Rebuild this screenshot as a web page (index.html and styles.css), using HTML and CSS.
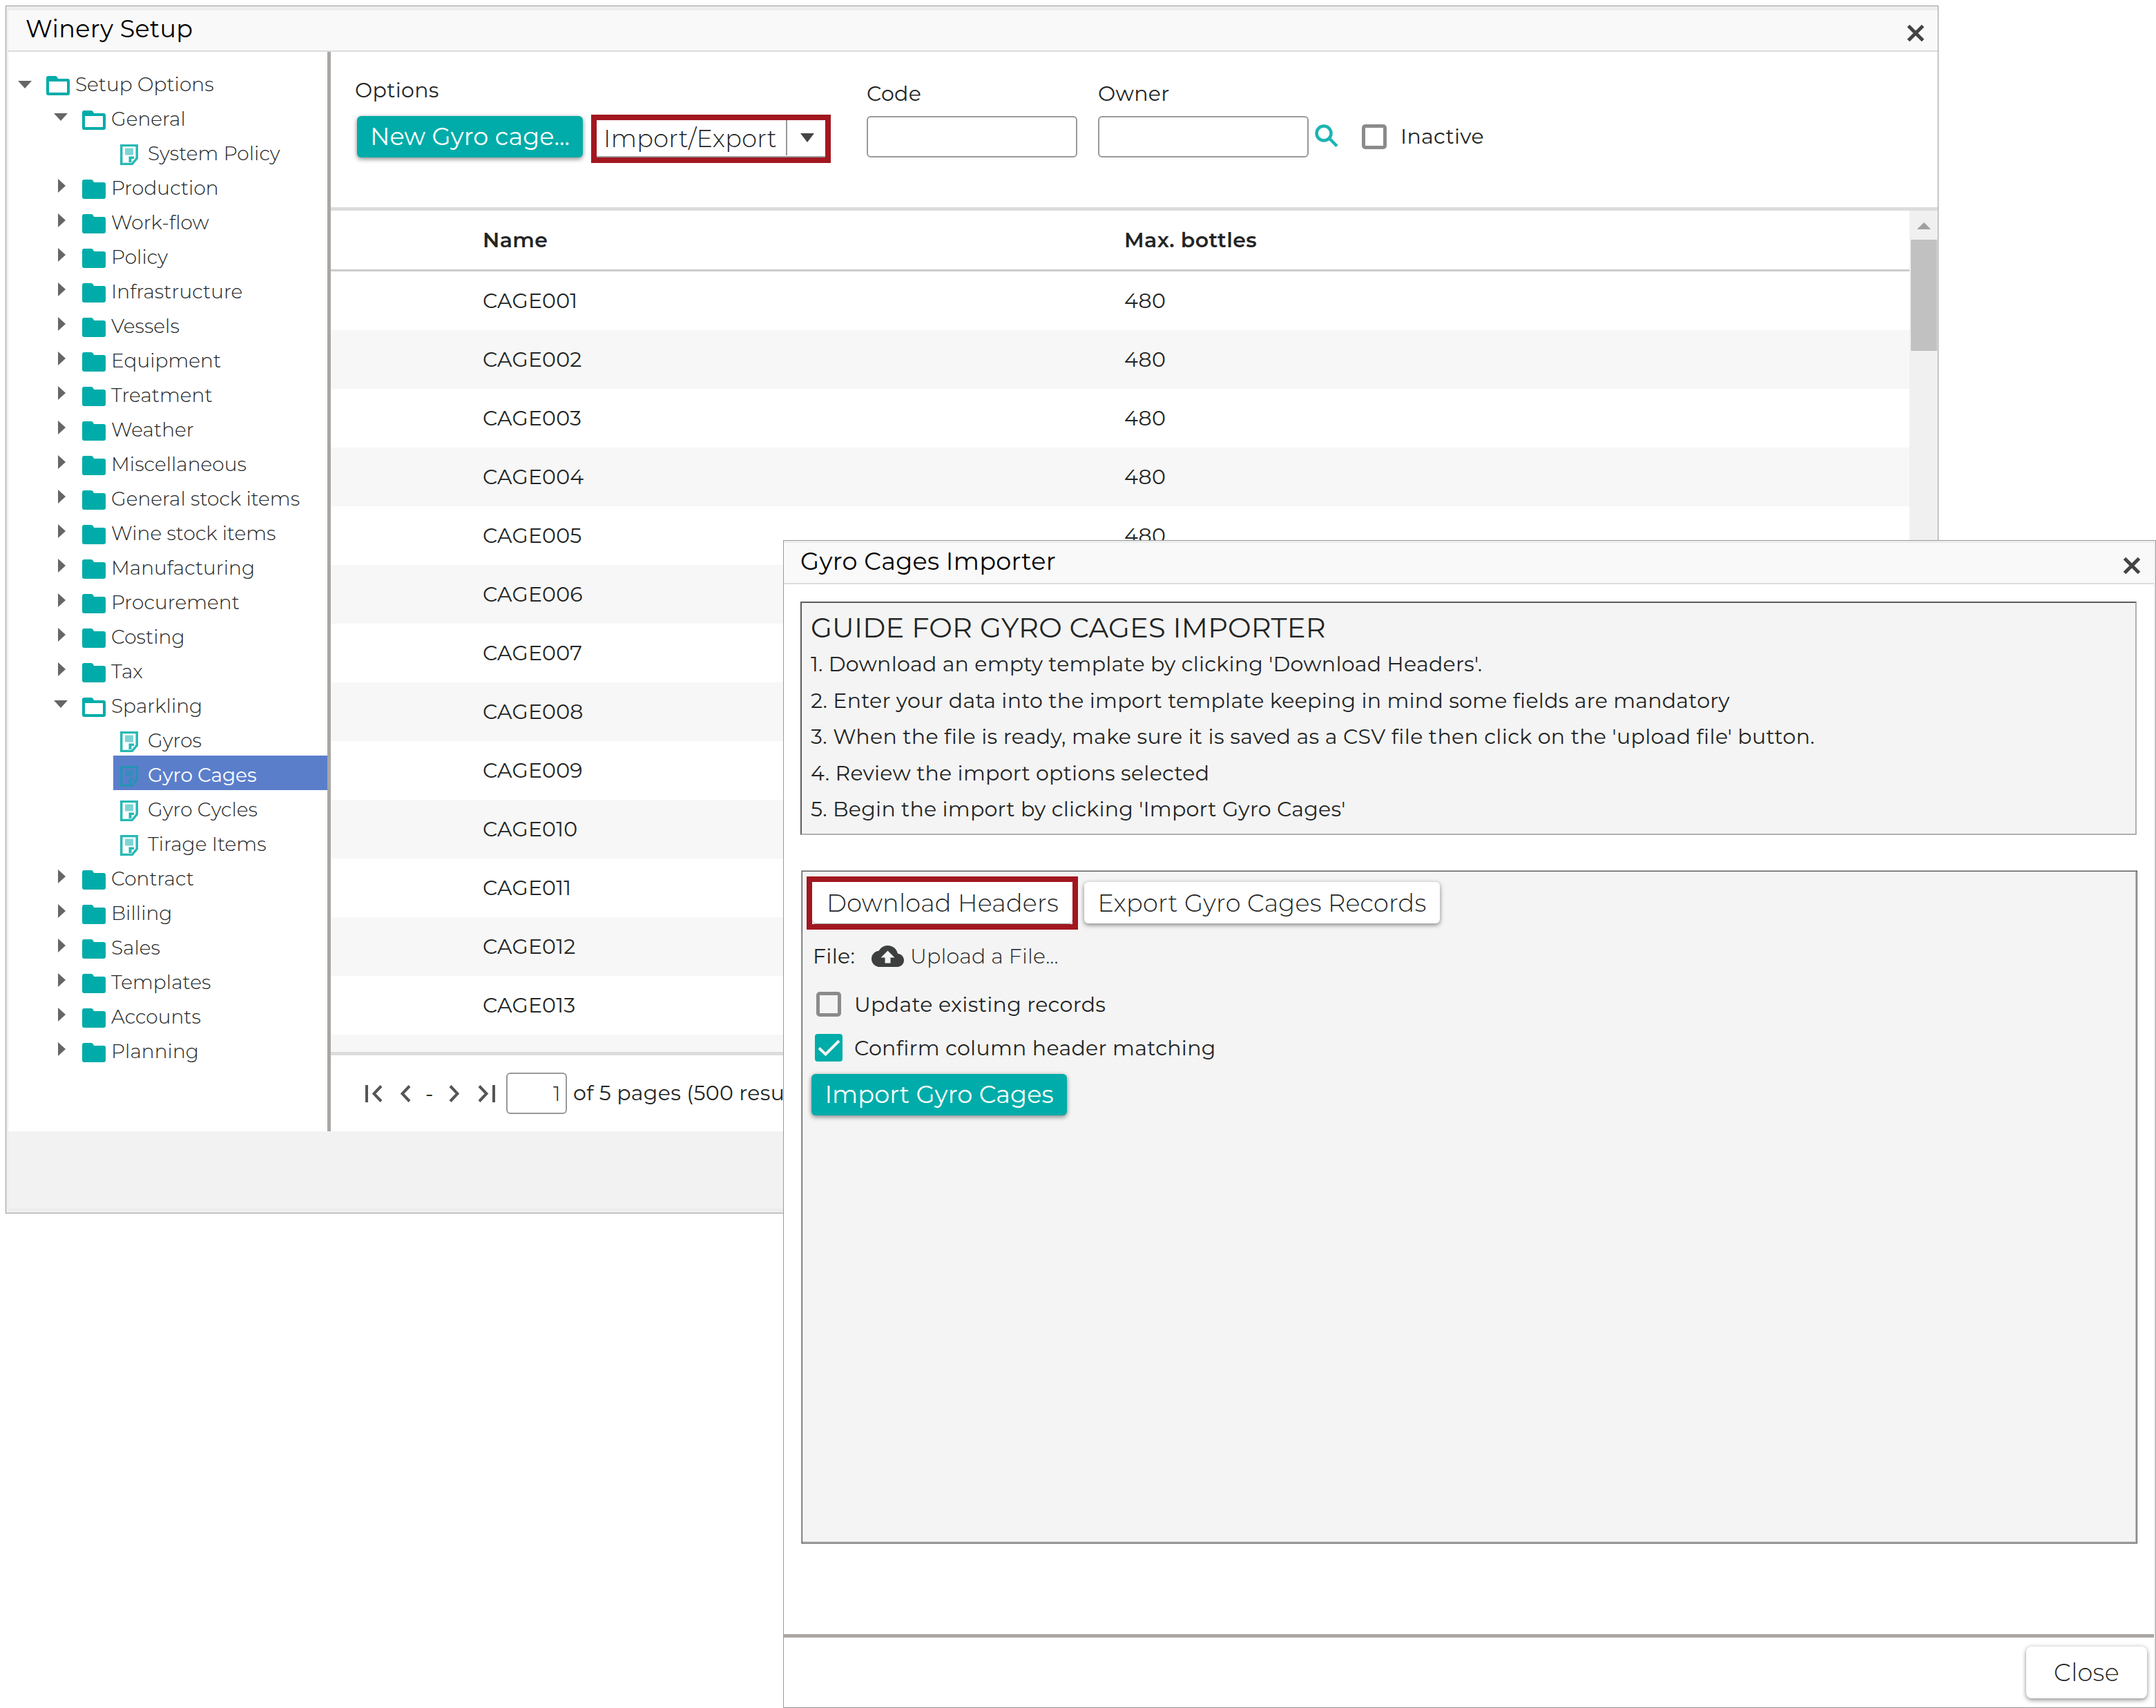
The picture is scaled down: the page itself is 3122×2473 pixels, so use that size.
FILE: index.html
```html
<!DOCTYPE html>
<html lang="en">
<head>
<meta charset="utf-8">
<title>Winery Setup</title>
<link rel="stylesheet" href="styles.css">
</head>
<body>
<svg class="sprite" aria-hidden="true">
  <symbol id="folder" viewBox="0 0 34 28"><path d="M3 0h10q2 0 3 2l1 2h14q3 0 3 3v18q0 3-3 3H3q-3 0-3-3V3q0-3 3-3z"/></symbol>
  <symbol id="folder-open" viewBox="0 0 34 28"><path fill-rule="evenodd" d="M3 0h10q2 0 3 2l1 2h14q3 0 3 3v18q0 3-3 3H3q-3 0-3-3V3q0-3 3-3zM4 8v16h26V8z"/></symbol>
  <symbol id="doc" viewBox="0 0 26 30"><path d="M1.750 1.500h22.500V20l-7 8.500H1.750z" fill="none" stroke="currentColor" stroke-width="3.500"/><path d="M7 5.500h12v10H7z" opacity=".6"/><path d="M12.500 26v-8.500H20V21h-3.500v5z"/></symbol>
  <symbol id="down" viewBox="0 0 20 11"><path d="M0 0h20L10 11z"/></symbol>
  <symbol id="right" viewBox="0 0 11 20"><path d="M0 0v20l11-10z"/></symbol>
  <symbol id="close" viewBox="0 0 26 26"><path d="M2.500 2.500l21 21M23.500 2.500l-21 21" fill="none" stroke="currentColor" stroke-width="5"/></symbol>
</svg>

<section class="window main-window">
  <header class="titlebar"><h1 class="title">Winery Setup</h1><svg class="close-x"><use href="#close"/></svg></header>
  <div class="workspace">
    <nav class="tree">
      <div class="node root"><svg class="arrow down"><use href="#down"/></svg><svg class="folder"><use href="#folder-open"/></svg><span class="label">Setup Options</span></div>
      <div class="node"><svg class="arrow down"><use href="#down"/></svg><svg class="folder"><use href="#folder-open"/></svg><span class="label">General</span></div>
      <div class="node leaf"><svg class="doc"><use href="#doc"/></svg><span class="label">System Policy</span></div>
      <div class="node"><svg class="arrow"><use href="#right"/></svg><svg class="folder"><use href="#folder"/></svg><span class="label">Production</span></div>
      <div class="node"><svg class="arrow"><use href="#right"/></svg><svg class="folder"><use href="#folder"/></svg><span class="label">Work-flow</span></div>
      <div class="node"><svg class="arrow"><use href="#right"/></svg><svg class="folder"><use href="#folder"/></svg><span class="label">Policy</span></div>
      <div class="node"><svg class="arrow"><use href="#right"/></svg><svg class="folder"><use href="#folder"/></svg><span class="label">Infrastructure</span></div>
      <div class="node"><svg class="arrow"><use href="#right"/></svg><svg class="folder"><use href="#folder"/></svg><span class="label">Vessels</span></div>
      <div class="node"><svg class="arrow"><use href="#right"/></svg><svg class="folder"><use href="#folder"/></svg><span class="label">Equipment</span></div>
      <div class="node"><svg class="arrow"><use href="#right"/></svg><svg class="folder"><use href="#folder"/></svg><span class="label">Treatment</span></div>
      <div class="node"><svg class="arrow"><use href="#right"/></svg><svg class="folder"><use href="#folder"/></svg><span class="label">Weather</span></div>
      <div class="node"><svg class="arrow"><use href="#right"/></svg><svg class="folder"><use href="#folder"/></svg><span class="label">Miscellaneous</span></div>
      <div class="node"><svg class="arrow"><use href="#right"/></svg><svg class="folder"><use href="#folder"/></svg><span class="label">General stock items</span></div>
      <div class="node"><svg class="arrow"><use href="#right"/></svg><svg class="folder"><use href="#folder"/></svg><span class="label">Wine stock items</span></div>
      <div class="node"><svg class="arrow"><use href="#right"/></svg><svg class="folder"><use href="#folder"/></svg><span class="label">Manufacturing</span></div>
      <div class="node"><svg class="arrow"><use href="#right"/></svg><svg class="folder"><use href="#folder"/></svg><span class="label">Procurement</span></div>
      <div class="node"><svg class="arrow"><use href="#right"/></svg><svg class="folder"><use href="#folder"/></svg><span class="label">Costing</span></div>
      <div class="node"><svg class="arrow"><use href="#right"/></svg><svg class="folder"><use href="#folder"/></svg><span class="label">Tax</span></div>
      <div class="node"><svg class="arrow down"><use href="#down"/></svg><svg class="folder"><use href="#folder-open"/></svg><span class="label">Sparkling</span></div>
      <div class="node leaf"><svg class="doc"><use href="#doc"/></svg><span class="label">Gyros</span></div>
      <div class="node leaf selected"><svg class="doc"><use href="#doc"/></svg><span class="label">Gyro Cages</span></div>
      <div class="node leaf"><svg class="doc"><use href="#doc"/></svg><span class="label">Gyro Cycles</span></div>
      <div class="node leaf"><svg class="doc"><use href="#doc"/></svg><span class="label">Tirage Items</span></div>
      <div class="node"><svg class="arrow"><use href="#right"/></svg><svg class="folder"><use href="#folder"/></svg><span class="label">Contract</span></div>
      <div class="node"><svg class="arrow"><use href="#right"/></svg><svg class="folder"><use href="#folder"/></svg><span class="label">Billing</span></div>
      <div class="node"><svg class="arrow"><use href="#right"/></svg><svg class="folder"><use href="#folder"/></svg><span class="label">Sales</span></div>
      <div class="node"><svg class="arrow"><use href="#right"/></svg><svg class="folder"><use href="#folder"/></svg><span class="label">Templates</span></div>
      <div class="node"><svg class="arrow"><use href="#right"/></svg><svg class="folder"><use href="#folder"/></svg><span class="label">Accounts</span></div>
      <div class="node"><svg class="arrow"><use href="#right"/></svg><svg class="folder"><use href="#folder"/></svg><span class="label">Planning</span></div>
    </nav>
    <main class="content">
      <div class="toolbar">
        <div class="options">
          <div class="caption">Options</div>
          <div class="buttons">
            <button class="btn primary new-cage">New Gyro cage...</button>
            <div class="split highlight"><span class="split-label">Import/Export</span><span class="split-arrow"><svg viewBox="0 0 20 13"><path d="M0 0h20L10 13z"/></svg></span></div>
          </div>
        </div>
        <label class="field"><span class="caption">Code</span><input type="text"></label>
        <label class="field"><span class="caption">Owner</span><input type="text"></label>
        <svg class="search" viewBox="0 0 34 33"><circle cx="13" cy="13" r="10.500"/><path d="M20.500 20L32 31.500"/></svg>
        <span class="check toolbar-check"></span>
        <span class="inactive">Inactive</span>
      </div>
      <div class="list">
        <div class="grid">
          <div class="row head"><span class="name">Name</span><span>Max. bottles</span></div>
          <div class="row"><span class="name">CAGE001</span><span>480</span></div>
          <div class="row"><span class="name">CAGE002</span><span>480</span></div>
          <div class="row"><span class="name">CAGE003</span><span>480</span></div>
          <div class="row"><span class="name">CAGE004</span><span>480</span></div>
          <div class="row"><span class="name">CAGE005</span><span>480</span></div>
          <div class="row"><span class="name">CAGE006</span></div>
          <div class="row"><span class="name">CAGE007</span></div>
          <div class="row"><span class="name">CAGE008</span></div>
          <div class="row"><span class="name">CAGE009</span></div>
          <div class="row"><span class="name">CAGE010</span></div>
          <div class="row"><span class="name">CAGE011</span></div>
          <div class="row"><span class="name">CAGE012</span></div>
          <div class="row"><span class="name">CAGE013</span></div>
          <div class="row"></div>
        </div>
        <div class="scrollbar"><svg class="scroll-up" viewBox="0 0 20 10"><path d="M0 10h20L10 0z"/></svg><div class="thumb"></div></div>
      </div>
      <div class="pager">
        <svg class="first" viewBox="0 0 25 25"><path d="M2 0v25M23 1.500L12.500 12.500 23 23.500"/></svg>
        <svg class="prev" viewBox="0 0 15 25"><path d="M13 1.500L2.500 12.500 13 23.500"/></svg>
        <span class="dash">-</span>
        <svg class="next" viewBox="0 0 15 25"><path d="M2 1.500L12.500 12.500 2 23.500"/></svg>
        <svg class="last" viewBox="0 0 25 25"><path d="M23 0v25M2 1.500L12.500 12.500 2 23.500"/></svg>
        <input class="page" type="text" value="1">
        <span class="total">of 5 pages (500 resu</span>
      </div>
    </main>
  </div>
  <footer class="main-footer"></footer>
</section>

<section class="window importer">
  <header class="titlebar"><h2 class="title">Gyro Cages Importer</h2><svg class="close-x"><use href="#close"/></svg></header>
  <div class="importer-body">
    <div class="guide">
      <h3>GUIDE FOR GYRO CAGES IMPORTER</h3>
      <p>1. Download an empty template by clicking 'Download Headers'.</p>
      <p>2. Enter your data into the import template keeping in mind some fields are mandatory</p>
      <p class="wide">3. When the file is ready, make sure it is saved as a CSV file then click on the 'upload file' button.</p>
      <p>4. Review the import options selected</p>
      <p>5. Begin the import by clicking 'Import Gyro Cages'</p>
    </div>
    <div class="actions">
      <div class="action-row">
        <div class="highlight download"><button class="btn plain">Download Headers</button></div>
        <button class="btn export">Export Gyro Cages Records</button>
      </div>
      <div class="file-row"><span class="file-label">File:</span>
        <svg class="cloud" viewBox="0 0 47 31"><path fill-rule="evenodd" d="M37.900 11.700C36.600 5 30.700 0 23.500 0 17.900 0 13 3.200 10.500 7.800 4.600 8.400 0 13.400 0 19.300 0 25.800 5.300 31 11.800 31h25.400C42.600 31 47 26.700 47 21.300c0-5.100-4-9.300-9.100-9.600zM27.500 17.500v8h-8v-8h-6l10-10 10 10z"/></svg>
        <span class="upload">Upload a File...</span></div>
      <div class="check-row update"><span class="check"></span><span>Update existing records</span></div>
      <div class="check-row confirm"><svg class="checked" viewBox="0 0 40 40"><rect width="40" height="40" rx="4"/><path d="M6 20.500l9.500 9L35 10"/></svg><span>Confirm column header matching</span></div>
      <button class="btn primary import">Import Gyro Cages</button>
    </div>
  </div>
  <footer class="importer-footer"><button class="btn close-btn">Close</button></footer>
</section>
</body>
</html>
```
FILE: styles.css
```css
* { box-sizing: border-box; }

body {
  position: relative;
  width: 3122px;
  height: 2473px;
  margin: 0;
  overflow: hidden;
  background: #fff;
  color: #232525;
  font-family: Montserrat, Inter, "Open Sans", sans-serif;
  font-size: 30px;
  font-weight: 400;
  letter-spacing: .32px;
}

h1, h2, h3, p { margin: 0; font-weight: 400; }
svg { display: block; flex: none; fill: currentColor; }
button, input { font: inherit; color: inherit; letter-spacing: inherit; }
.sprite { position: absolute; width: 0; height: 0; }

/* Windows */
.window {
  position: absolute;
  display: flex;
  flex-direction: column;
  border: 1px solid #9b9b9b;
  background: #ededed;
}
.main-window {
  left: 8px;
  top: 8px;
  width: 2799px;
  height: 1749px;
  padding: 6px 0 6px 3px;
}
.importer {
  left: 1134px;
  top: 782px;
  width: 1988px;
  height: 1691px;
  padding: 3px 2px 1px 0;
}
.titlebar {
  display: flex;
  flex: none;
  justify-content: space-between;
  height: 60px;
  background: #f9f9f9;
  border-bottom: 2px solid #dcdcdc;
  color: #000;
}
.title { font-size: 35px; line-height: 54px; white-space: nowrap; }
.main-window .title { padding-left: 25px; }
.importer .title { padding-left: 24px; }
.close-x { width: 26px; height: 26px; margin: 20px 19px 0 0; color: #444; }

/* Tree */
.workspace { display: flex; height: 1563px; background: #fff; }
.tree {
  flex: none;
  width: 467px;
  padding-top: 19px;
  border-right: 5px solid #aaa6a3;
  font-size: 28px;
  font-weight: 300;
  letter-spacing: .04px;
}
.node {
  display: flex;
  height: 50px;
  padding-left: 72px;
  white-space: nowrap;
}
.arrow { width: 11px; height: 20px; margin: 15px 24px 0 0; color: #666; }
.arrow.down { width: 20px; height: 11px; margin: 20px 21px 0 -6px; }
.folder { width: 34px; height: 28px; margin: 16px 8px 0 0; color: #00aca9; }
.label { margin-top: 3px; line-height: 50px; }
.root { padding-left: 20px; }
.root .arrow.down { margin-top: 23px; }
.leaf { margin-left: 152px; padding-left: 10px; }
.doc { width: 26px; height: 30px; margin: 15px 14px 0 0; color: #28b9b5; }
.selected { background: #5b7ecb; color: #fff; font-weight: 400; letter-spacing: -.1px; }
.selected .doc { color: #2593b5; }

/* Toolbar */
.content { display: flex; flex-direction: column; flex: 1; min-width: 0; }
.toolbar {
  display: flex;
  align-items: flex-start;
  flex: none;
  height: 230px;
  padding: 35px 0 0 34px;
  border-bottom: 5px solid #dcdcdc;
  white-space: nowrap;
}
.caption { display: block; line-height: 42px; }
.options .caption { margin-bottom: 16px; padding-left: 1px; }
.buttons { display: flex; align-items: flex-start; }
.btn {
  height: 60px;
  padding: 0;
  border: 0;
  border-radius: 6px;
  background: #fff;
  box-shadow: 0 3px 6px rgba(0, 0, 0, .35), 0 0 6px rgba(0, 0, 0, .15);
  font-size: 35px;
  font-weight: 300;
  line-height: 60px;
  text-align: center;
  white-space: nowrap;
}
.primary { background: #00aca9; color: #fff; font-weight: 400; letter-spacing: .1px; }
.new-cage { width: 327px; margin: 0 12px 0 4px; line-height: 58px; }
.highlight { border: 8px solid #a2171f; background: #fff; }
.split {
  display: flex;
  width: 347px;
  height: 70px;
  margin: -2px 52px 0 0;
  font-size: 35px;
  font-weight: 300;
  box-shadow: inset 0 -2px #999;
}
.split-label { width: 276px; height: 51px; padding-left: 10px; border-right: 2px solid #999; line-height: 53px; }
.split-arrow { padding: 19px 0 0 19px; color: #444; }
.split-arrow svg { width: 20px; height: 13px; }
.field { display: flex; flex-direction: column; gap: 11px; margin: 5px 30px 0 0; }
.field + .field { margin-right: 9px; }
input { padding: 0; border: 2px solid #999; border-radius: 6px; background: #fff; outline: 0; }
.field input { width: 305px; height: 60px; }
.search { width: 34px; height: 33px; margin: 70px 34px 0 0; fill: none; stroke: #1cb5b2; stroke-width: 4.500; }
.check { flex: none; width: 36px; height: 36px; border: 5px solid #8b8b8b; border-radius: 5px; }
.toolbar-check { margin: 70px 20px 0 0; }
.inactive { margin-top: 58px; line-height: 60px; }

/* Cage list */
.list { display: flex; height: 1218px; overflow: hidden; }
.grid { flex: 1; }
.row { display: flex; height: 85px; padding-left: 220px; line-height: 85px; }
.row:nth-child(odd) { background: #f7f7f7; }
.row.head { height: 88px; border-bottom: 3px solid #ccc; background: #fff; font-weight: 600; letter-spacing: .4px; }
.name { width: 929px; }
.scrollbar { width: 41px; background: #f0f0f0; padding: 17px 1px 0 2px; }
.scroll-up { width: 20px; height: 10px; margin: 0 0 15px 9px; color: #a0a0a0; }
.thumb { height: 161px; background: #c1c1c1; }

/* Pager */
.pager {
  display: flex;
  align-items: center;
  height: 115px;
  padding-left: 50px;
  border-top: 5px solid #dcdcdc;
  white-space: nowrap;
}
.pager svg { height: 25px; fill: none; stroke: #555; stroke-width: 4; }
.first, .last { width: 25px; }
.prev, .next { width: 15px; }
.prev { margin-left: 26px; }
.dash { width: 14px; margin: 0 20px 0 21px; }
.last { margin: 0 16px 0 27px; }
.page { width: 88px; height: 60px; padding-right: 7px; text-align: right; font-weight: 300; }
.total { margin-left: 9px; padding-bottom: 2px; }
.main-footer { flex: 1; background: #f2f2f2; }

/* Importer */
.importer-body { flex: 1; padding: 25px 0 0 24px; background: #fff; }
.guide {
  width: 1935px;
  height: 338px;
  margin-bottom: 51px;
  padding: 10px 13px;
  border: 2px solid;
  border-color: #5c5c5c #b0b0b0 #b0b0b0 #5c5c5c;
  background: #f4f4f4;
  letter-spacing: .26px;
  white-space: nowrap;
}
.guide h3 { margin-bottom: 2px; font-size: 40px; line-height: 51px; letter-spacing: .2px; }
.guide p { line-height: 52.500px; }
.guide .wide { letter-spacing: .35px; }
.actions {
  width: 1935px;
  height: 975px;
  margin-left: 1px;
  padding: 8px 7px;
  border: 1px solid;
  border-color: #b0b0b0 #5c5c5c #5c5c5c #b0b0b0;
  box-shadow: inset 1px 1px #5c5c5c, inset -2px -2px #b0b0b0;
  background: #f4f4f4;
  white-space: nowrap;
}
.action-row { display: flex; }
.download { width: 393px; height: 77px; margin-right: 9px; }
.plain { width: 100%; padding-left: 1px; box-shadow: 0 1px #999; line-height: 62px; letter-spacing: .25px; }
.export { width: 515px; margin-top: 8px; line-height: 62px; letter-spacing: .28px; }
.file-row { display: flex; align-items: center; height: 50px; margin: 13px 0 20px 9px; }
.file-label { width: 85px; }
.cloud { width: 47px; height: 31px; margin-right: 9px; color: #3c3f3e; }
.upload { font-weight: 300; letter-spacing: .2px; }
.check-row { display: flex; align-items: center; height: 50px; }
.update { margin: 0 0 13px 14px; }
.update .check { margin-right: 19px; }
.confirm { margin: 0 0 13px 12px; }
.checked { width: 40px; height: 40px; margin-right: 17px; color: #00aca9; }
.checked path { fill: none; stroke: #f4f4f4; stroke-width: 4; }
.import { width: 370px; margin-left: 7px; }
.importer-footer {
  display: flex;
  justify-content: flex-end;
  height: 105px;
  padding: 13px 10px 0 0;
  border-top: 5px solid #aaa6a3;
  background: #fff;
}
.close-btn { width: 175px; height: 75px; border-radius: 8px; line-height: 75px; }
```
